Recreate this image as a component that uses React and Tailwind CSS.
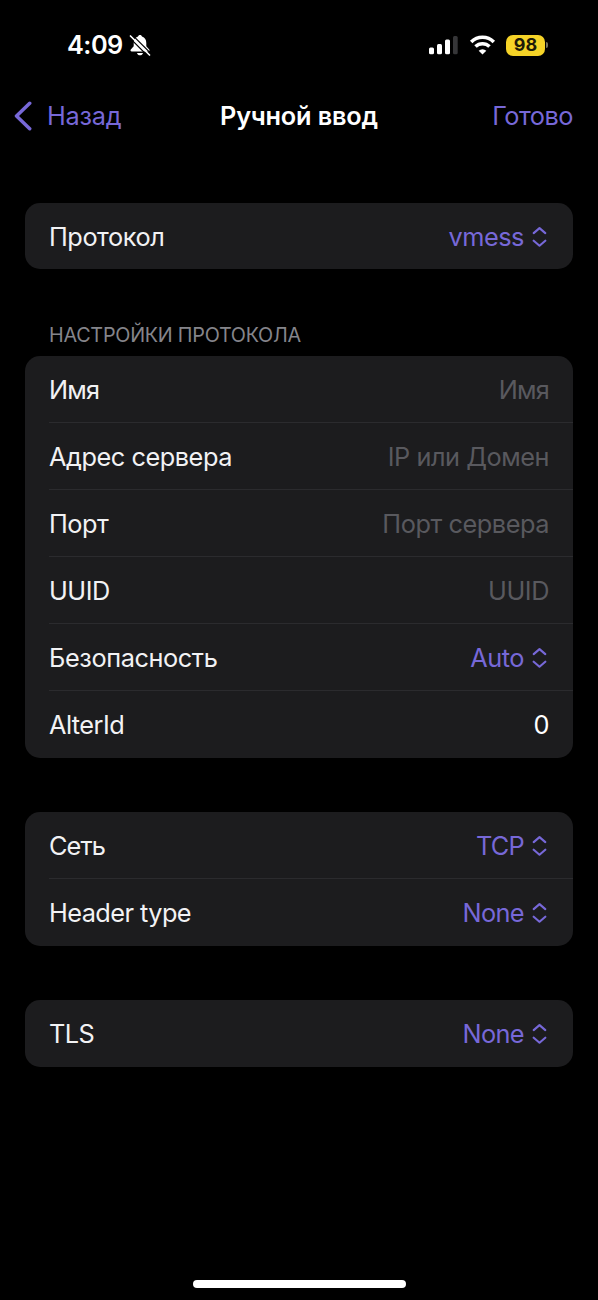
function Chevrons() {
  return (
    <svg className="mr-0.5 h-5 w-4 shrink-0" viewBox="0 0 16 20" fill="none" stroke="currentColor" strokeWidth="2.100" strokeLinecap="round" strokeLinejoin="round">
      <path d="M2.700 6.100 8.500 1.100 14.300 6.100M2.700 13.700 8.500 18.700 14.300 13.700" />
    </svg>
  );
}

function Row({ label, labelClass = "tracking-[-0.45px]", value, valueClass = "tracking-[-0.45px]", kind = "placeholder", last = true }) {
  return (
    <div className="flex h-[67px] flex-col pl-[24px]">
      <div className="-mb-px flex h-[67px] shrink-0 items-center justify-between pt-px pr-[24px]">
        <span className={"text-[#f2f2f4] " + labelClass}>{label}</span>
        {kind === "menu" ? (
          <span className="flex items-center gap-[7px] text-[#7768d8]">
            <span className={valueClass}>{value}</span>
            <Chevrons />
          </span>
        ) : (
          <span className={(kind === "text" ? "text-white " : "text-[#59595e] ") + valueClass}>{value}</span>
        )}
      </div>
      {!last && <div className="h-px shrink-0 bg-[#2b2b2e]" />}
    </div>
  );
}

function Card({ children, className = "" }) {
  return <section className={"mx-[25px] overflow-hidden rounded-[15px] bg-[#1c1c1e] " + className}>{children}</section>;
}

function StatusBar() {
  return (
    <div className="flex h-[90px] items-center justify-between pr-[50px] pl-[67px] text-white">
      <div className="flex items-center gap-[6px]">
        <span className="text-[25.300px] font-semibold tracking-[-0.5px]">4:09</span>
        <svg className="h-[22px] w-[22px]" viewBox="0 0 22 22">
          <path fill="#fff" d="M11 1C9.900 1 9.200 1.700 9 2.600 6 3.500 4.700 6 4.700 9v3.300L2 15.200c-1 1.100-.5 2.300.8 2.300h16.400c1.300 0 1.800-1.200.8-2.300l-2.700-2.900V9c0-3-1.300-5.500-4.300-6.400C12.800 1.700 12.100 1 11 1ZM8 18.900c.4 1.500 1.500 2.300 3 2.300s2.600-.8 3-2.300Z" />
          <path d="M0 3.200 19 22.200" stroke="#000" strokeWidth="1.200" />
          <path d="M1.500 2 20.500 21" stroke="#fff" strokeWidth="1.700" strokeLinecap="round" />
          <path d="M3 .6 22 19.600" stroke="#000" strokeWidth="1.200" />
        </svg>
      </div>
      <div className="flex items-center">
        <svg className="h-[20px] w-[31px]" viewBox="0 0 31 20" fill="#fff">
          <rect x="1" y="12.500" width="5" height="6.700" rx="1.500" />
          <rect x="9" y="9" width="5" height="10.200" rx="1.500" />
          <rect x="17" y="4.500" width="5" height="14.700" rx="1.500" />
          <rect x="25" y="1" width="4.700" height="18.200" rx="1.500" fill="#363638" />
        </svg>
        <svg className="ml-[10px] h-[20px] w-[27px]" viewBox="0 0 27 20" fill="none" stroke="#fff" strokeWidth="3.500">
          <path d="M2.200 6.900a16 16 0 0 1 22.600 0" />
          <path d="M6.500 11.600a9.900 9.900 0 0 1 14 0" />
          <path d="M13.500 19.500 9.700 15.700a5.400 5.400 0 0 1 7.600 0Z" fill="#fff" stroke="none" />
        </svg>
        <div className="ml-[10px] flex h-[21px] w-[39px] items-center justify-center rounded-[7px] bg-[#f5d327] text-[18px] font-bold tracking-[0.1px] text-[#1d1a08]">98</div>
        <div className="ml-[1px] h-[6px] w-[2px] rounded-r-full bg-[#77745f]" />
      </div>
    </div>
  );
}

export default function App() {
  return (
    <main className="flex h-[1300px] w-[598px] flex-col bg-black font-['Inter',sans-serif] text-[25.300px] leading-[32px] whitespace-nowrap">
      <StatusBar />
      <header className="grid h-[52px] grid-cols-[1fr_auto_1fr] items-center px-[25px] text-[#7768d8]">
        <div className="-ml-[11px] flex items-center">
          <svg className="h-[30px] w-[18px]" viewBox="0 0 18 30" fill="none" stroke="currentColor" strokeWidth="3.500" strokeLinecap="round" strokeLinejoin="round">
            <path d="M15.700 2.300 2.500 15l13.200 12.700" />
          </svg>
          <span className="ml-[15px] tracking-[-0.25px]">Назад</span>
        </div>
        <h1 className="font-semibold tracking-[-0.15px] text-white">Ручной ввод</h1>
        <span className="text-right tracking-[-0.5px]">Готово</span>
      </header>

      <Card className="mt-[61px] h-[66px]">
        <Row label="Протокол" value="vmess" kind="menu" />
      </Card>

      <h2 className="mt-[53px] flex h-[34px] items-start pl-[49px] text-[19.800px] leading-[26px] tracking-[-0.25px] text-[#85858b]">НАСТРОЙКИ ПРОТОКОЛА</h2>
      <Card>
        <Row label="Имя" labelClass="tracking-[-0.8px]" value="Имя" valueClass="tracking-[-0.8px]" last={false} />
        <Row label="Адрес сервера" value="IP или Домен" last={false} />
        <Row label="Порт" value="Порт сервера" last={false} />
        <Row label="UUID" value="UUID" last={false} />
        <Row label="Безопасность" labelClass="tracking-[-0.4px]" value="Auto" kind="menu" last={false} />
        <Row label="AlterId" labelClass="tracking-[-0.55px]" value="0" kind="text" />
      </Card>

      <Card className="mt-[54px]">
        <Row label="Сеть" labelClass="tracking-[-0.9px]" value="TCP" valueClass="tracking-[-0.7px]" kind="menu" last={false} />
        <Row label="Header type" labelClass="tracking-[-0.55px]" value="None" valueClass="tracking-[-0.6px]" kind="menu" />
      </Card>

      <Card className="mt-[54px]">
        <Row label="TLS" labelClass="tracking-[-0.6px]" value="None" valueClass="tracking-[-0.6px]" kind="menu" />
      </Card>

      <div className="mx-auto mt-auto mb-[12px] h-[8px] w-[213px] rounded-full bg-white" />
    </main>
  );
}
